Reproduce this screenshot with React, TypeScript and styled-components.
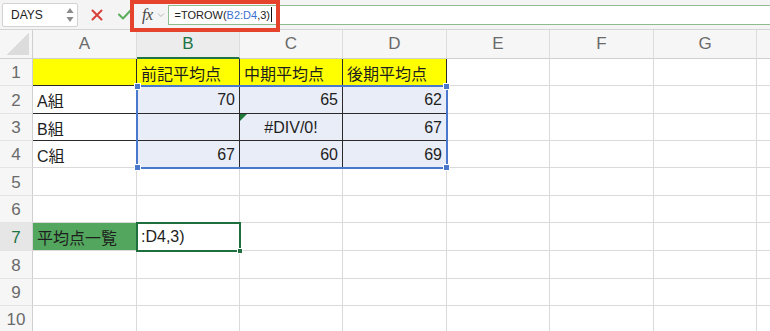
import React from "react";
import styled, { createGlobalStyle } from "styled-components";

const Global = createGlobalStyle`
  html, body { margin: 0; padding: 0; background: #ffffff; }
  body { font-family: "Liberation Sans", "Noto Sans CJK JP", sans-serif; overflow: hidden; }
  * { box-sizing: border-box; }
`;

const FONT = `"Liberation Sans", "Noto Sans CJK JP", sans-serif`;

const Page = styled.div`
  position: relative;
  width: 770px;
  height: 331px;
  overflow: hidden;
  background: #ffffff;
`;

const Toolbar = styled.div`
  height: 30px;
  display: flex;
  align-items: center;
  background: #f4f4f4;
  border-bottom: 1px solid #d4d4d4;
`;

const NameBox = styled.div`
  margin-left: 2px;
  width: 76px;
  height: 24px;
  background: #ffffff;
  border: 1px solid #d2d2d2;
  border-radius: 2px;
  display: flex;
  align-items: center;
  justify-content: space-between;
  padding: 0 3px 0 8px;
  font-family: ${FONT};
  font-size: 12px;
  color: #222;
`;

const IconSlot = styled.div<{ $ml: number }>`
  margin-left: ${(p) => p.$ml}px;
  display: flex;
  align-items: center;
  justify-content: center;
`;

const Fx = styled.span`
  margin-left: 10px;
  font-family: "Liberation Serif", "DejaVu Serif", serif;
  font-style: italic;
  font-size: 16px;
  color: #444;
  letter-spacing: -0.5px;
`;

const FormulaInput = styled.div`
  flex: 1;
  height: 20px;
  margin-left: 3px;
  background: #ffffff;
  border: 1px solid #8fbc8f;
  border-right: none;
  display: flex;
  align-items: center;
  padding-left: 6px;
  font-family: ${FONT};
  font-size: 11px;
  color: #222;
`;

const Ref = styled.span`
  color: #3a6fd0;
`;

const Caret = styled.span`
  display: inline-block;
  width: 1px;
  height: 15px;
  background: #111;
  margin-left: 1px;
`;

const Highlight = styled.div`
  position: absolute;
  left: 130px;
  top: 0;
  width: 150px;
  height: 32px;
  border: 4px solid #e6432d;
  pointer-events: none;
  z-index: 10;
`;

const colWidths = [33, 104, 103, 103, 104, 103, 104, 103, 103];
const rowHeights = [27, 28, 27, 27, 28, 27, 28, 28, 27, 27];

const Sheet = styled.div`
  display: grid;
  width: max-content;
  grid-template-columns: ${colWidths.map((w) => w + "px").join(" ")};
  grid-template-rows: 29px ${rowHeights.map((h) => h + "px").join(" ")};
`;

const Corner = styled.div`
  grid-row: 1;
  grid-column: 1;
  background: #f6f6f6;
  border-right: 1px solid #d0d0d0;
  border-bottom: 1px solid #d0d0d0;
  display: flex;
  align-items: flex-end;
  justify-content: flex-end;
  padding: 0 3px 3px 0;
`;

const CornerTri = styled.div`
  width: 23px;
  height: 22px;
  background: linear-gradient(to bottom right, transparent 50%, #dcdcdc 50%);
`;

const ColHead = styled.div<{ $c: number; $active?: boolean }>`
  grid-row: 1;
  grid-column: ${(p) => p.$c};
  background: ${(p) => (p.$active ? "#ececec" : "#f6f6f6")};
  border-right: 1px solid #dddddd;
  border-bottom: ${(p) => (p.$active ? "2px solid #217346" : "1px solid #d0d0d0")};
  display: flex;
  align-items: center;
  justify-content: center;
  padding-top: ${(p) => (p.$active ? 1 : 0)}px;
  font-family: ${FONT};
  font-size: 17px;
  color: ${(p) => (p.$active ? "#217346" : "#6a6a6a")};
`;

const RowHead = styled.div<{ $r: number; $active?: boolean }>`
  grid-row: ${(p) => p.$r};
  grid-column: 1;
  background: ${(p) => (p.$active ? "#e6e6e6" : "#f6f6f6")};
  border-right: 1px solid #d0d0d0;
  border-bottom: 1px solid #e4e4e4;
  display: flex;
  align-items: center;
  justify-content: center;
  padding-top: 2px;
  font-family: ${FONT};
  font-size: 17px;
  color: ${(p) => (p.$active ? "#217346" : "#6a6a6a")};
`;

const Cell = styled.div<{
  $r: number;
  $c: number;
  $bg?: string;
  $align?: "left" | "right" | "center";
  $rb?: boolean;
  $bb?: boolean;
  $err?: boolean;
}>`
  position: relative;
  grid-row: ${(p) => p.$r};
  grid-column: ${(p) => p.$c};
  background: ${(p) => p.$bg || "#ffffff"};
  border-right: 1px solid ${(p) => (p.$rb ? "#2a2a2a" : "#dadada")};
  border-bottom: 1px solid ${(p) => (p.$bb ? "#2a2a2a" : "#dadada")};
  display: flex;
  align-items: center;
  justify-content: ${(p) =>
    p.$align === "right" ? "flex-end" : p.$align === "center" ? "center" : "flex-start"};
  padding: 1px 4px 0 4px;
  font-family: ${FONT};
  font-size: 16px;
  color: #1e1e1e;
  white-space: nowrap;
  overflow: hidden;
  &::before {
    content: "";
    display: ${(p) => (p.$err ? "block" : "none")};
    position: absolute;
    left: 0;
    top: 0;
    width: 0;
    height: 0;
    border-top: 7px solid #1f7a3a;
    border-right: 7px solid transparent;
  }
`;

const Selection = styled.div`
  grid-column: 3 / 6;
  grid-row: 3 / 6;
  margin: -1px -1px -1px -1px;
  border: 2px solid #4a78cc;
  position: relative;
  pointer-events: none;
`;

const Handle = styled.div<{ $x: "l" | "r"; $y: "t" | "b" }>`
  position: absolute;
  width: 7px;
  height: 7px;
  background: #4a78cc;
  border: 1px solid #ffffff;
  ${(p) => (p.$x === "l" ? "left: -4px;" : "right: -4px;")}
  ${(p) => (p.$y === "t" ? "top: -4px;" : "bottom: -4px;")}
`;

const Active = styled.div`
  grid-column: 3 / 4;
  grid-row: 8 / 9;
  margin: -1px -1px -1px -1px;
  border: 2px solid #1f6e3e;
  position: relative;
  pointer-events: none;
`;

const ActiveHandle = styled.div`
  position: absolute;
  right: -4px;
  bottom: -4px;
  width: 6px;
  height: 6px;
  background: #1f6e3e;
  border: 1px solid #ffffff;
`;

type Spec = {
  t?: string;
  al?: "left" | "right" | "center";
  bg?: string;
  rb?: boolean;
  bb?: boolean;
  err?: boolean;
};

const Y = "#ffff00";
const S = "#e9edf7";
const G = "#53a65d";

const data: Record<number, Spec[]> = {
  1: [
    { bg: Y, rb: true, bb: true },
    { t: "前記平均点", bg: Y, rb: true, bb: true },
    { t: "中期平均点", bg: Y, rb: true, bb: true },
    { t: "後期平均点", bg: Y, rb: true, bb: true },
  ],
  2: [
    { t: "A組", rb: true, bb: true },
    { t: "70", al: "right", bg: S, rb: true, bb: true },
    { t: "65", al: "right", bg: S, rb: true, bb: true },
    { t: "62", al: "right", bg: S, rb: true, bb: true },
  ],
  3: [
    { t: "B組", rb: true, bb: true },
    { bg: S, rb: true, bb: true },
    { t: "#DIV/0!", al: "center", bg: S, rb: true, bb: true, err: true },
    { t: "67", al: "right", bg: S, rb: true, bb: true },
  ],
  4: [
    { t: "C組", rb: true },
    { t: "67", al: "right", bg: S, rb: true },
    { t: "60", al: "right", bg: S, rb: true },
    { t: "69", al: "right", bg: S, rb: true },
  ],
  7: [{ t: "平均点一覧", bg: G }, { t: ":D4,3)" }],
};

const letters = ["A", "B", "C", "D", "E", "F", "G", ""];

export default function App() {
  return (
    <Page>
      <Global />
      <Toolbar>
        <NameBox>
          <span>DAYS</span>
          <svg width="8" height="16" viewBox="0 0 8 16">
            <path d="M4 1 L7.5 6 H0.5 Z" fill="#8a8a8a" />
            <path d="M4 15 L7.5 10 H0.5 Z" fill="#8a8a8a" />
          </svg>
        </NameBox>
        <IconSlot $ml={13}>
          <svg width="12" height="12" viewBox="0 0 12 12">
            <path d="M1.5 1.5 L10.5 10.5 M10.5 1.5 L1.5 10.5" stroke="#d8413a" strokeWidth="2" strokeLinecap="round" />
          </svg>
        </IconSlot>
        <IconSlot $ml={15}>
          <svg width="14" height="11" viewBox="0 0 14 11">
            <path d="M1 5.5 L5 9.5 L13 1" stroke="#5aad5a" strokeWidth="2" fill="none" strokeLinecap="round" strokeLinejoin="round" />
          </svg>
        </IconSlot>
        <Fx>fx</Fx>
        <IconSlot $ml={4}>
          <svg width="8" height="6" viewBox="0 0 8 6">
            <path d="M1 1.5 L4 4.5 L7 1.5" stroke="#b5b5b5" strokeWidth="1" fill="none" />
          </svg>
        </IconSlot>
        <FormulaInput>
          <span>
            =TOROW(<Ref>B2:D4</Ref>,3)
          </span>
          <Caret />
        </FormulaInput>
      </Toolbar>
      <Sheet>
        <Corner>
          <CornerTri />
        </Corner>
        {letters.map((l, i) => (
          <ColHead key={i} $c={i + 2} $active={l === "B"}>
            {l}
          </ColHead>
        ))}
        {rowHeights.map((_, ri) => {
          const r = ri + 1;
          const specs = data[r] || [];
          return (
            <React.Fragment key={r}>
              <RowHead $r={r + 1} $active={r === 7}>
                {r}
              </RowHead>
              {letters.map((_l, ci) => {
                const s = specs[ci] || {};
                return (
                  <Cell
                    key={ci}
                    $r={r + 1}
                    $c={ci + 2}
                    $bg={s.bg}
                    $align={s.al}
                    $rb={s.rb}
                    $bb={s.bb}
                    $err={s.err}
                  >
                    {s.t}
                  </Cell>
                );
              })}
            </React.Fragment>
          );
        })}
        <Selection>
          <Handle $x="l" $y="t" />
          <Handle $x="r" $y="t" />
          <Handle $x="l" $y="b" />
          <Handle $x="r" $y="b" />
        </Selection>
        <Active>
          <ActiveHandle />
        </Active>
      </Sheet>
      <Highlight />
    </Page>
  );
}
